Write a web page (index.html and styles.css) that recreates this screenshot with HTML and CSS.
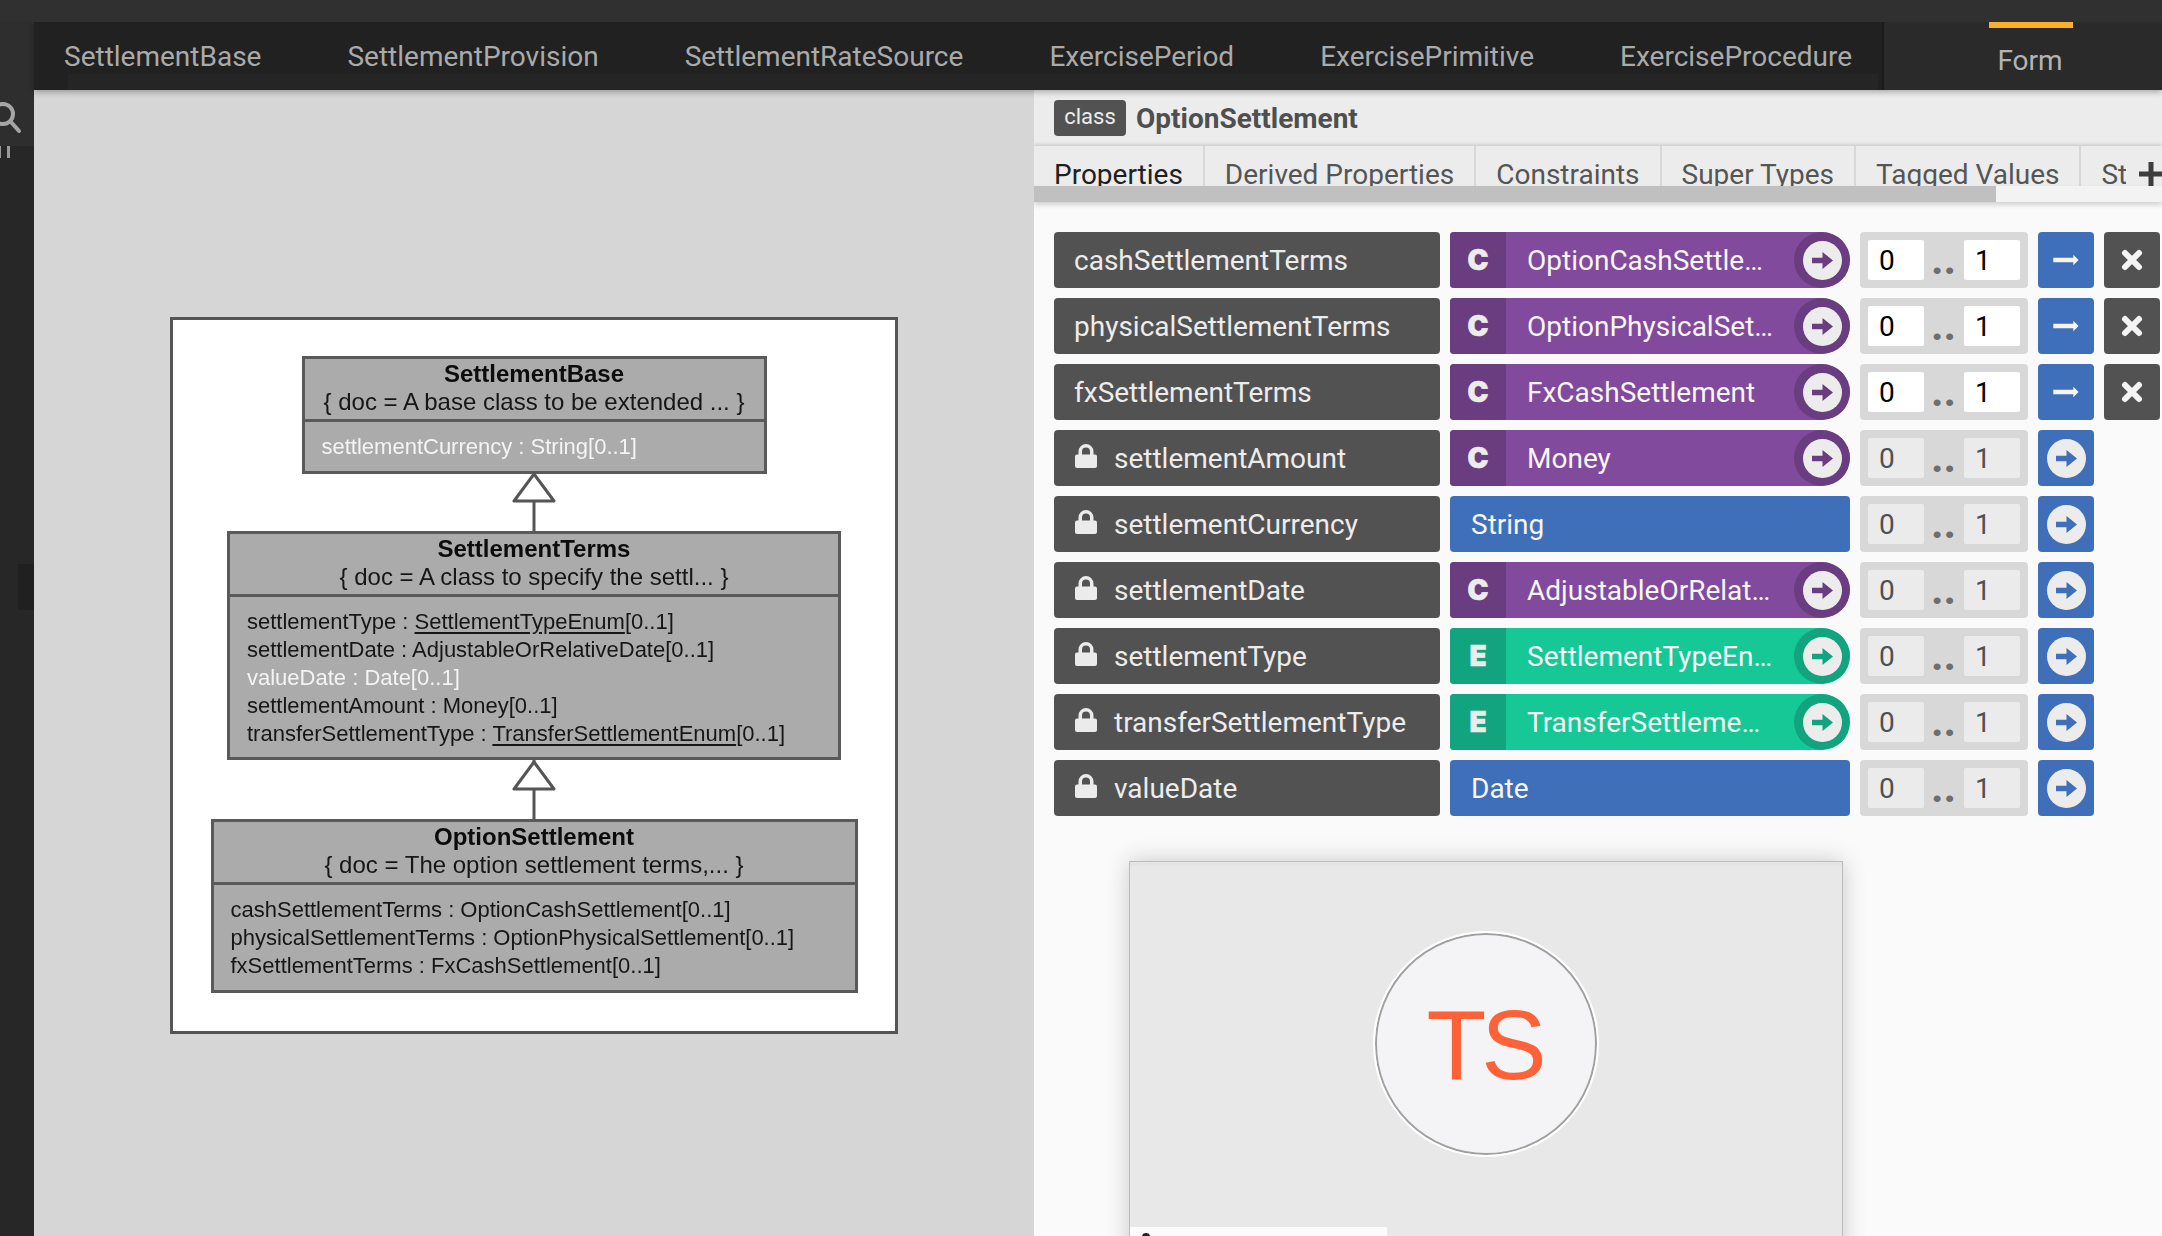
FILE: index.html
```html
<!DOCTYPE html>
<html lang="en">
<head>
  <meta charset="UTF-8">
  <title>OptionSettlement</title>
  <link rel="stylesheet" href="styles.css">
</head>
<body>

<svg class="icon-defs" width="0" height="0">
  <symbol id="go" viewBox="0 0 39 39">
    <circle cx="19.5" cy="19.5" r="19.5" fill="#ececec"/>
    <path d="M9 16.800h10.500v-5.800l10.500 8.500-10.500 8.500v-5.800H9z" fill="currentColor"/>
  </symbol>
  <symbol id="lock" viewBox="0 0 22 24">
    <path d="M0 12.500a2 2 0 0 1 2-2h1.500V7.500a7.500 7.500 0 0 1 15 0v3H20a2 2 0 0 1 2 2V22a2 2 0 0 1-2 2H2a2 2 0 0 1-2-2zM7 10.500h8V7.500a4 4 0 0 0-8 0z" fill="#ebebeb" fill-rule="evenodd"/>
  </symbol>
  <symbol id="thin-arrow" viewBox="0 0 56 56">
    <path d="M15.300 25.700h20v-3l5.300 5.300-5.300 5.300v-3h-20z" fill="#f4f4f4"/>
  </symbol>
  <symbol id="cross" viewBox="0 0 56 56">
    <path d="M21 21l14 14M35 21L21 35" stroke="#f4f4f4" stroke-width="6" stroke-linecap="round"/>
  </symbol>
</svg>

<div class="topbar"></div>

<div class="workspace">
  <div class="activity">
    <div class="activity-search">
      <svg width="24" height="44" viewBox="0 0 24 44">
        <circle cx="3" cy="23" r="10" fill="none" stroke="#a6a6a6" stroke-width="4"/>
        <path d="M11 31l8 9" stroke="#a6a6a6" stroke-width="4" stroke-linecap="round"/>
      </svg>
    </div>
    <div class="activity-label"></div>
    <div class="activity-sash"></div>
  </div>

  <div class="content">
    <div class="tabbar">
      <div class="file-tabs">
        <span class="file-tab">SettlementBase</span>
        <span class="file-tab">SettlementProvision</span>
        <span class="file-tab">SettlementRateSource</span>
        <span class="file-tab">ExercisePeriod</span>
        <span class="file-tab">ExercisePrimitive</span>
        <span class="file-tab">ExerciseProcedure</span>
        <div class="file-tabs-thumb"></div>
      </div>
      <div class="form-tab"><span class="form-tab-mark"></span>Form</div>
    </div>

    <div class="panes">
      <div class="canvas">
        <div class="diagram">
          <div class="node node-base">
            <div class="node-head">
              <strong>SettlementBase</strong>
              <div>{ doc = A base class to be extended ... }</div>
            </div>
            <div class="node-attrs">
              <div class="attr-light">settlementCurrency : String[0..1]</div>
            </div>
          </div>
          <svg class="link" width="44" height="59" viewBox="0 0 44 59">
            <path d="M22 0v59" stroke="#555" stroke-width="3"/>
            <path d="M22 2L2 29h40z" fill="#fff" stroke="#555" stroke-width="3" stroke-linejoin="round"/>
          </svg>
          <div class="node node-terms">
            <div class="node-head">
              <strong>SettlementTerms</strong>
              <div>{ doc = A class to specify the settl... }</div>
            </div>
            <div class="node-attrs">
              <div>settlementType : <u>SettlementTypeEnum</u>[0..1]</div>
              <div>settlementDate : AdjustableOrRelativeDate[0..1]</div>
              <div class="attr-light">valueDate : Date[0..1]</div>
              <div>settlementAmount : Money[0..1]</div>
              <div>transferSettlementType : <u>TransferSettlementEnum</u>[0..1]</div>
            </div>
          </div>
          <svg class="link" width="44" height="59" viewBox="0 0 44 59">
            <path d="M22 0v59" stroke="#555" stroke-width="3"/>
            <path d="M22 2L2 29h40z" fill="#fff" stroke="#555" stroke-width="3" stroke-linejoin="round"/>
          </svg>
          <div class="node node-option">
            <div class="node-head">
              <strong>OptionSettlement</strong>
              <div>{ doc = The option settlement terms,... }</div>
            </div>
            <div class="node-attrs">
              <div>cashSettlementTerms : OptionCashSettlement[0..1]</div>
              <div>physicalSettlementTerms : OptionPhysicalSettlement[0..1]</div>
              <div>fxSettlementTerms : FxCashSettlement[0..1]</div>
            </div>
          </div>
        </div>
      </div>

      <div class="editor">
        <div class="editor-head">
          <span class="badge">class</span>
          <span class="editor-title">OptionSettlement</span>
        </div>
        <div class="section-tabs">
          <div class="section-tabs-list">
            <span class="section-tab section-tab-on">Properties</span>
            <span class="section-tab">Derived Properties</span>
            <span class="section-tab">Constraints</span>
            <span class="section-tab">Super Types</span>
            <span class="section-tab">Tagged Values</span>
            <span class="section-tab">Stereotypes</span>
          </div>
          <div class="add-tab">
            <svg width="24" height="24" viewBox="0 0 24 24"><path d="M12 0v24M0 12h24" stroke="#3d3d3d" stroke-width="5"/></svg>
          </div>
        </div>
        <div class="tabs-scroll"><div class="tabs-scroll-thumb"></div></div>

        <div class="rows">
          <div class="row">
            <div class="prop-name">cashSettlementTerms</div>
            <div class="type type-class"><span class="type-tag">C</span><span class="type-name">OptionCashSettlement</span><span class="go-ring"><svg class="go"><use href="#go"/></svg></span></div>
            <div class="mult"><span class="mult-val">0</span><span class="mult-dots">..</span><span class="mult-val">1</span></div>
            <div class="btn btn-blue"><svg class="btn-icon"><use href="#thin-arrow"/></svg></div>
            <div class="btn btn-dark"><svg class="btn-icon"><use href="#cross"/></svg></div>
          </div>
          <div class="row">
            <div class="prop-name">physicalSettlementTerms</div>
            <div class="type type-class"><span class="type-tag">C</span><span class="type-name">OptionPhysicalSettlement</span><span class="go-ring"><svg class="go"><use href="#go"/></svg></span></div>
            <div class="mult"><span class="mult-val">0</span><span class="mult-dots">..</span><span class="mult-val">1</span></div>
            <div class="btn btn-blue"><svg class="btn-icon"><use href="#thin-arrow"/></svg></div>
            <div class="btn btn-dark"><svg class="btn-icon"><use href="#cross"/></svg></div>
          </div>
          <div class="row">
            <div class="prop-name">fxSettlementTerms</div>
            <div class="type type-class"><span class="type-tag">C</span><span class="type-name">FxCashSettlement</span><span class="go-ring"><svg class="go"><use href="#go"/></svg></span></div>
            <div class="mult"><span class="mult-val">0</span><span class="mult-dots">..</span><span class="mult-val">1</span></div>
            <div class="btn btn-blue"><svg class="btn-icon"><use href="#thin-arrow"/></svg></div>
            <div class="btn btn-dark"><svg class="btn-icon"><use href="#cross"/></svg></div>
          </div>
          <div class="row row-locked">
            <div class="prop-name"><svg class="lock"><use href="#lock"/></svg>settlementAmount</div>
            <div class="type type-class"><span class="type-tag">C</span><span class="type-name">Money</span><span class="go-ring"><svg class="go"><use href="#go"/></svg></span></div>
            <div class="mult"><span class="mult-val">0</span><span class="mult-dots">..</span><span class="mult-val">1</span></div>
            <div class="btn btn-blue"><svg class="go"><use href="#go"/></svg></div>
          </div>
          <div class="row row-locked">
            <div class="prop-name"><svg class="lock"><use href="#lock"/></svg>settlementCurrency</div>
            <div class="type type-plain"><span class="type-name">String</span></div>
            <div class="mult"><span class="mult-val">0</span><span class="mult-dots">..</span><span class="mult-val">1</span></div>
            <div class="btn btn-blue"><svg class="go"><use href="#go"/></svg></div>
          </div>
          <div class="row row-locked">
            <div class="prop-name"><svg class="lock"><use href="#lock"/></svg>settlementDate</div>
            <div class="type type-class"><span class="type-tag">C</span><span class="type-name">AdjustableOrRelativeDate</span><span class="go-ring"><svg class="go"><use href="#go"/></svg></span></div>
            <div class="mult"><span class="mult-val">0</span><span class="mult-dots">..</span><span class="mult-val">1</span></div>
            <div class="btn btn-blue"><svg class="go"><use href="#go"/></svg></div>
          </div>
          <div class="row row-locked">
            <div class="prop-name"><svg class="lock"><use href="#lock"/></svg>settlementType</div>
            <div class="type type-enum"><span class="type-tag">E</span><span class="type-name">SettlementTypeEnum</span><span class="go-ring"><svg class="go"><use href="#go"/></svg></span></div>
            <div class="mult"><span class="mult-val">0</span><span class="mult-dots">..</span><span class="mult-val">1</span></div>
            <div class="btn btn-blue"><svg class="go"><use href="#go"/></svg></div>
          </div>
          <div class="row row-locked">
            <div class="prop-name"><svg class="lock"><use href="#lock"/></svg>transferSettlementType</div>
            <div class="type type-enum"><span class="type-tag">E</span><span class="type-name">TransferSettlementEnum</span><span class="go-ring"><svg class="go"><use href="#go"/></svg></span></div>
            <div class="mult"><span class="mult-val">0</span><span class="mult-dots">..</span><span class="mult-val">1</span></div>
            <div class="btn btn-blue"><svg class="go"><use href="#go"/></svg></div>
          </div>
          <div class="row row-locked">
            <div class="prop-name"><svg class="lock"><use href="#lock"/></svg>valueDate</div>
            <div class="type type-plain"><span class="type-name">Date</span></div>
            <div class="mult"><span class="mult-val">0</span><span class="mult-dots">..</span><span class="mult-val">1</span></div>
            <div class="btn btn-blue"><svg class="go"><use href="#go"/></svg></div>
          </div>
        </div>

        <div class="card">
          <div class="avatar">TS</div>
          <div class="card-name"><span class="card-name-dot"></span></div>
        </div>
      </div>
    </div>
  </div>
</div>

</body>
</html>
```

FILE: styles.css
```css
:root {
  --dark: #525252;
  --blue: #3f6fb8;
  --purple: #824a9c;
  --purple-dark: #6a3d80;
  --green: #17c897;
  --green-dark: #12a47e;
}

* {
  box-sizing: border-box;
}

html, body {
  margin: 0;
  height: 100%;
  overflow: hidden;
}

body {
  background-color: #212121;
  font-family: Roboto, sans-serif;
  font-size: 28px;
}

.icon-defs {
  display: block;
  height: 0;
}

.topbar {
  height: 22px;
  background-color: #303030;
}

.workspace {
  display: flex;
  height: 1214px;
  overflow: hidden;
}

/* left strip, mostly cut off by the window edge */
.activity {
  width: 34px;
  flex: none;
  background-color: #272727;
}

.activity-search {
  height: 124px;
  padding-top: 69px;
  overflow: hidden;
  background-color: #2e2e2e;
}

.activity-search svg {
  display: block;
}

.activity-label {
  width: 10px;
  height: 12px;
  border-left: 1px solid #9a9a9a;
  border-right: 3px solid #9a9a9a;
}

.activity-sash {
  width: 16px;
  height: 46px;
  margin: 406px 0 0 18px;
  background-color: #202020;
}

.content {
  flex: 1;
  min-width: 0;
}

/* top tabs */
.tabbar {
  display: flex;
  height: 68px;
  position: relative;
  z-index: 2;
  background-color: #212121;
  box-shadow: 0 2px 6px rgba(0, 0, 0, 0.3);
}

.file-tabs {
  flex: 1;
  display: flex;
  align-items: center;
  gap: 86px;
  padding: 1px 0 0 30px;
  position: relative;
  color: #aaaaaa;
  white-space: nowrap;
}

.file-tabs-thumb {
  position: absolute;
  left: 34px;
  right: 4px;
  bottom: 0;
  height: 16px;
  background-color: #252525;
}

.form-tab {
  width: 280px;
  padding: 22px 0 0 14px;
  border-left: 2px solid #1a1a1a;
  background-color: #2a2a2a;
  color: #b4b4b4;
  text-align: center;
  position: relative;
}

.form-tab-mark {
  position: absolute;
  top: 0;
  left: 105px;
  width: 84px;
  height: 6px;
  background-color: #fcb12b;
}

.panes {
  display: flex;
  height: 1146px;
}

/* diagram side */
.canvas {
  width: 1000px;
  flex: none;
  padding: 227px 0 0 136px;
  background-color: #d6d6d6;
}

.diagram {
  width: 728px;
  height: 717px;
  padding-top: 36px;
  display: flex;
  flex-direction: column;
  align-items: center;
  border: 3px solid #555555;
  background-color: #ffffff;
  font-family: "Liberation Sans", Arial, sans-serif;
  font-size: 22px;
  line-height: 28px;
  color: #161616;
  filter: blur(0.6px);
}

.node {
  border: 3px solid #5a5a5a;
  background-color: #ababab;
  white-space: nowrap;
}

.node-base {
  width: 465px;
  margin-bottom: -2px;
}

.node-terms { width: 614px; }
.node-option { width: 647px; }

.node-head {
  height: 63px;
  padding-top: 1px;
  border-bottom: 3px solid #5a5a5a;
  text-align: center;
  font-size: 24px;
}

.node-head strong {
  display: block;
  color: #0c0c0c;
}

.node-attrs {
  padding: 11px 0 9px 17px;
}

.node-base .node-attrs {
  padding-bottom: 10px;
}

.node-option .node-attrs {
  padding-bottom: 10px;
}

.node-attrs u {
  text-underline-offset: 3px;
}

.attr-light {
  color: #f4f4f4;
}

.link {
  display: block;
  flex: none;
}

/* property editor */
.editor {
  flex: 1;
  min-width: 0;
  overflow: hidden;
  background-color: #fafafa;
}

.editor-head {
  height: 56px;
  display: flex;
  align-items: center;
  gap: 10px;
  padding-left: 20px;
  background-color: #ececec;
}

.badge {
  width: 72px;
  height: 36px;
  border-radius: 4px;
  background-color: var(--dark);
  color: #ececec;
  font-size: 22px;
  line-height: 34px;
  text-align: center;
}

.editor-title {
  font-weight: 700;
  color: #4f4f4f;
}

.section-tabs {
  display: flex;
  height: 40px;
  position: relative;
  background-color: #ececec;
  box-shadow: 0 -2px 3px rgba(0, 0, 0, 0.12);
}

.section-tabs-list {
  flex: 1;
  min-width: 0;
  display: flex;
  overflow: hidden;
  white-space: nowrap;
  color: #555555;
}

.section-tab {
  padding: 11px 20px 0;
  border-right: 2px solid #d8d8d8;
  line-height: 36px;
}

.section-tab-on {
  color: #202020;
}

.add-tab {
  width: 36px;
  flex: none;
  padding: 16px 0 0 13px;
  overflow: hidden;
  background-color: #ececec;
}

.add-tab svg {
  display: block;
}

.tabs-scroll {
  height: 16px;
  position: relative;
  background-color: #f3f3f3;
  box-shadow: 0 3px 5px rgba(0, 0, 0, 0.16);
}

.tabs-scroll-thumb {
  width: 962px;
  height: 16px;
  background-color: #c0c0c0;
}

.rows {
  display: flex;
  flex-direction: column;
  gap: 10px;
  padding: 30px 0 0 20px;
}

.row {
  display: grid;
  grid-template-columns: 386px 400px 168px 56px 56px;
  grid-template-rows: 56px;
  gap: 10px;
  height: 56px;
}

.prop-name {
  display: flex;
  align-items: center;
  padding-left: 20px;
  border-radius: 4px;
  background-color: var(--dark);
  color: #ececec;
}

.lock {
  width: 22px;
  height: 24px;
  margin: -4px 17px 0 1px;
}

.type {
  display: flex;
  align-items: center;
  border-radius: 4px;
  color: #f6f6f6;
  overflow: hidden;
}

.type-class, .type-enum {
  border-radius: 4px 28px 28px 4px;
}

.type-class { background-color: var(--purple); }
.type-enum { background-color: var(--green); }
.type-plain { background-color: var(--blue); }

.type-tag {
  width: 56px;
  height: 56px;
  flex: none;
  font-family: Inter, Roboto, sans-serif;
  font-size: 28px;
  font-weight: 900;
  -webkit-text-stroke: 0.6px #ececec;
  line-height: 56px;
  text-align: center;
  color: #ececec;
}

.type-class .type-tag { background-color: var(--purple-dark); }
.type-enum .type-tag { background-color: var(--green-dark); }

.type-name {
  flex: 1;
  min-width: 0;
  padding: 0 19px 0 21px;
  overflow: hidden;
  white-space: nowrap;
  text-overflow: ellipsis;
}

.go-ring {
  width: 56px;
  height: 56px;
  flex: none;
  display: flex;
  align-items: center;
  justify-content: center;
  border-radius: 50%;
}

.type-class .go-ring { background-color: var(--purple-dark); color: var(--purple-dark); }
.type-enum .go-ring { background-color: var(--green-dark); color: var(--green-dark); }

.go {
  width: 39px;
  height: 39px;
  display: block;
}

.mult {
  display: flex;
  justify-content: space-between;
  padding: 8px;
  border-radius: 4px;
  background-color: #d8d8d8;
}

.mult-val {
  width: 56px;
  height: 40px;
  padding-left: 11px;
  border-radius: 2px;
  background-color: #ffffff;
  color: #000000;
  line-height: 41px;
}

.mult-dots {
  height: 40px;
  font-size: 38px;
  font-weight: 900;
  color: #6e6e6e;
  letter-spacing: 1px;
  line-height: 42px;
}

.row-locked .mult-val {
  background-color: #ebebeb;
  color: #505050;
}

.btn {
  display: flex;
  align-items: center;
  justify-content: center;
  border-radius: 4px;
  color: var(--blue);
}

.btn-blue { background-color: var(--blue); }
.btn-dark { background-color: var(--dark); }

.btn-icon {
  width: 56px;
  height: 56px;
  display: block;
}

/* profile card under the rows */
.card {
  width: 714px;
  height: 420px;
  margin: 45px 0 0 95px;
  padding-top: 71px;
  border: 1px solid #bdbdbd;
  background-color: #e8e8e8;
  box-shadow: 0 0 22px rgba(0, 0, 0, 0.2), inset 0 4px 0 #e4e4e4;
}

.avatar {
  width: 222px;
  height: 222px;
  margin: 0 auto;
  padding-right: 4px;
  border: 2px solid #a0a0a0;
  border-radius: 50%;
  outline: 2px solid #ffffff;
  background-color: #f4f4f6;
  color: #ff6239;
  font-family: "Liberation Sans", Arial, sans-serif;
  font-size: 98px;
  letter-spacing: -5px;
  line-height: 220px;
  text-align: center;
}

.card-name {
  width: 257px;
  height: 40px;
  margin-top: 72px;
  padding: 6px 0 0 12px;
  background-color: #fbfbfb;
}

.card-name-dot {
  display: block;
  width: 8px;
  height: 8px;
  border-radius: 50%;
  background-color: #222222;
}
```
